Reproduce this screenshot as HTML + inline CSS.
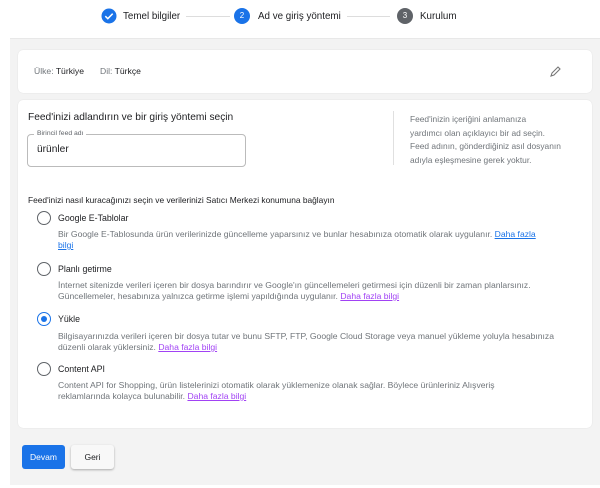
<!DOCTYPE html><html><head><meta charset="utf-8"><style>
*{margin:0;padding:0;box-sizing:border-box}
body{width:600px;height:488px;background:#fff;font-family:"Liberation Sans",sans-serif;position:relative;overflow:hidden;color:#202124}
.a{position:absolute;white-space:nowrap}
.bg{position:absolute;left:10px;top:38px;width:590px;height:447px;background:#f3f3f3;border-top:1px solid #e8e8e8}
.card{position:absolute;left:18px;width:574px;background:#fff;border-radius:5px;box-shadow:0 0 1px rgba(0,0,0,.15)}
.d{font-size:8.6px;color:#70757a;line-height:11px;white-space:normal}
.d u{color:#1a73e8}.d u.v{color:#a142f4}
.r{position:absolute;left:37px;width:14px;height:14px;border:1.5px solid #5f6368;border-radius:50%}
.lbl{font-size:8.8px;color:#202124}
</style></head><body>
<div class="bg"></div>
<svg class="a" style="left:101px;top:8px" width="16" height="16"><circle cx="8" cy="8" r="7.5" fill="#1a73e8"/><path d="M4.3 8.2l2.5 2.5 4.9-5" stroke="#fff" stroke-width="1.5" fill="none"/></svg>
<div class="a" style="left:123px;top:11px;font-size:9.8px">Temel bilgiler</div>
<div class="a" style="left:186px;top:16px;width:44px;height:1px;background:#ddd"></div>
<div class="a" style="left:234px;top:8px;width:16px;height:16px;border-radius:50%;background:#1a73e8;color:#fff;font-size:8px;text-align:center;line-height:16px">2</div>
<div class="a" style="left:258px;top:11px;font-size:9.8px">Ad ve giriş yöntemi</div>
<div class="a" style="left:347px;top:16px;width:43px;height:1px;background:#ddd"></div>
<div class="a" style="left:397px;top:8px;width:16px;height:16px;border-radius:50%;background:#5f6368;color:#fff;font-size:8px;text-align:center;line-height:16px">3</div>
<div class="a" style="left:420px;top:11px;font-size:9.8px">Kurulum</div>

<div class="card" style="top:50px;height:43px"></div>
<div class="a" style="left:34px;top:66px;font-size:8.6px;color:#70757a">Ülke: <span style="color:#202124">Türkiye</span><span style="display:inline-block;width:16px"></span>Dil: <span style="color:#202124">Türkçe</span></div>
<svg class="a" style="left:549px;top:65px" width="13" height="13"><path d="M2 11l1-3 6-6 2 2-6 6z" stroke="#777" stroke-width="1.1" fill="none"/></svg>

<div class="card" style="top:100px;height:328px"></div>
<div class="a" style="left:28px;top:112px;font-size:10.2px">Feed'inizi adlandırın ve bir giriş yöntemi seçin</div>
<div class="a" style="left:27px;top:134px;width:219px;height:33px;border:1px solid #bbb;border-radius:4px"></div>
<div class="a" style="left:34px;top:130px;background:#fff;padding:0 3px;font-size:6.8px;color:#5f6368">Birincil feed adı</div>
<div class="a" style="left:37px;top:144px;font-size:10.2px">ürünler</div>
<div class="a" style="left:393px;top:111px;width:1px;height:54px;background:#e0e0e0"></div>
<div class="a d" style="left:410px;top:113px;width:180px;line-height:13.5px;font-size:8.4px">Feed'inizin içeriğini anlamanıza<br>yardımcı olan açıklayıcı bir ad seçin.<br>Feed adının, gönderdiğiniz asıl dosyanın<br>adıyla eşleşmesine gerek yoktur.</div>

<div class="a" style="left:28px;top:195px;font-size:8.4px">Feed'inizi nasıl kuracağınızı seçin ve verilerinizi Satıcı Merkezi konumuna bağlayın</div>

<div class="r" style="top:211px"></div>
<div class="a lbl" style="left:58px;top:213px">Google E-Tablolar</div>
<div class="a d" style="left:58px;top:229px;width:490px">Bir Google E-Tablosunda ürün verilerinizde güncelleme yaparsınız ve bunlar hesabınıza otomatik olarak uygulanır. <u>Daha fazla bilgi</u></div>

<div class="r" style="top:262px"></div>
<div class="a lbl" style="left:58px;top:264px">Planlı getirme</div>
<div class="a d" style="left:58px;top:280px;width:490px">İnternet sitenizde verileri içeren bir dosya barındırır ve Google'ın güncellemeleri getirmesi için düzenli bir zaman planlarsınız. Güncellemeler, hesabınıza yalnızca getirme işlemi yapıldığında uygulanır. <u class="v">Daha fazla bilgi</u></div>

<div class="r" style="top:312px;border-color:#1a73e8"><div style="position:absolute;left:2.5px;top:2.5px;width:6px;height:6px;border-radius:50%;background:#1a73e8"></div></div>
<div class="a lbl" style="left:58px;top:314px">Yükle</div>
<div class="a d" style="left:58px;top:331px;width:500px">Bilgisayarınızda verileri içeren bir dosya tutar ve bunu SFTP, FTP, Google Cloud Storage veya manuel yükleme yoluyla hesabınıza düzenli olarak yüklersiniz. <u class="v">Daha fazla bilgi</u></div>

<div class="r" style="top:362px"></div>
<div class="a lbl" style="left:58px;top:364px">Content API</div>
<div class="a d" style="left:58px;top:380px;width:470px">Content API for Shopping, ürün listelerinizi otomatik olarak yüklemenize olanak sağlar. Böylece ürünleriniz Alışveriş reklamlarında kolayca bulunabilir. <u class="v">Daha fazla bilgi</u></div>

<div class="a" style="left:22px;top:445px;width:43px;height:24px;background:#1a73e8;border-radius:3px;color:#fff;font-size:8.5px;text-align:center;line-height:24px">Devam</div>
<div class="a" style="left:71px;top:445px;width:43px;height:24px;background:#f8f8f8;border-radius:3px;box-shadow:0 1px 2px rgba(0,0,0,.3);font-size:8.5px;text-align:center;line-height:24px">Geri</div>
</body></html>
